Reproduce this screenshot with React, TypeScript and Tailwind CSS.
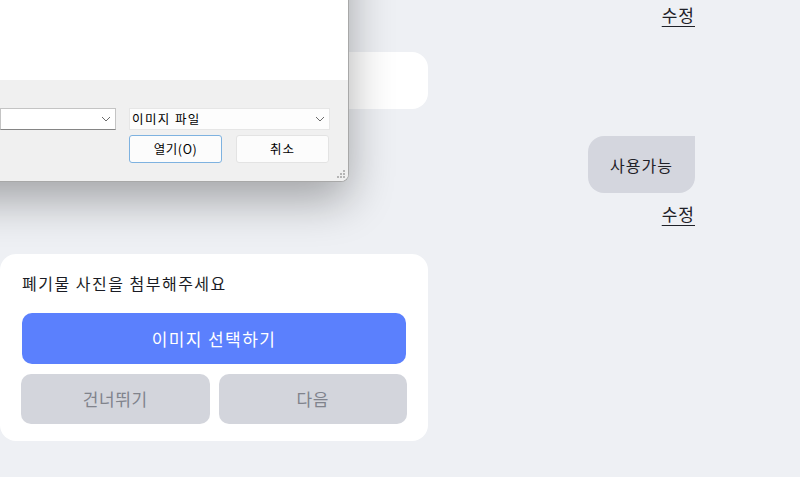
const font = "font-['Noto_Sans_CJK_KR','Noto_Sans',sans-serif]";

const Chevron = () => (
  <svg width="10" height="6" viewBox="0 0 10 6" className="text-[#6b6b6b]">
    <path d="M1 1l4 4 4-4" fill="none" stroke="currentColor" strokeWidth="1" />
  </svg>
);

const FileDialog = () => (
  <div className="absolute left-[-300px] top-[-220px] w-[649px] h-[402px] flex flex-col bg-white border-r border-b border-[#a8a8a8] rounded-br-lg shadow-[0_18px_45px_rgba(0,0,0,0.32)] overflow-hidden">
    <div className="flex-1 bg-white" />
    <div className="relative h-[101px] bg-[#f0f0f0] pl-[300px] pt-[28px] text-[12.5px] text-black">
      <div className="flex gap-[13px]">
        <div className="w-[116px] h-[22px] bg-white border border-[#c4c4c4] border-b-[#858585] flex items-center justify-end pr-[4px]">
          <Chevron />
        </div>
        <div className="w-[201px] h-[22px] bg-[#fdfdfd] border border-[#e6e6e6] flex items-center justify-between pl-[2px] pr-[4px]">
          <span className="tracking-[1.4px]">이미지 파일</span>
          <Chevron />
        </div>
      </div>
      <div className="flex gap-[14px] ml-[129px] mt-[5px]">
        <div className="w-[93px] h-[28px] bg-[#fcfcfc] border border-[#7eb2e0] rounded-[3px] flex items-center justify-center tracking-[0.6px]">
          열기(O)
        </div>
        <div className="w-[93px] h-[28px] bg-[#fcfcfc] border border-[#e3e3e3] rounded-[3px] flex items-center justify-center tracking-[1px]">
          취소
        </div>
      </div>
      <svg width="8" height="8" viewBox="0 0 8 8" className="absolute right-[3px] bottom-[3px]">
        <g fill="#b5b5b5">
          <rect x="6" y="0" width="2" height="2" />
          <rect x="3" y="3" width="2" height="2" />
          <rect x="6" y="3" width="2" height="2" />
          <rect x="0" y="6" width="2" height="2" />
          <rect x="3" y="6" width="2" height="2" />
          <rect x="6" y="6" width="2" height="2" />
        </g>
      </svg>
    </div>
  </div>
);

export default function App() {
  return (
    <div className={`relative w-[800px] h-[477px] overflow-hidden bg-[#eef0f4] ${font}`}>
      <div className="flex flex-col pr-[105px]">
        <button className="self-end mt-[2px] h-[25px] text-[17px] leading-[25px] tracking-[1px] text-[#1f2128] underline underline-offset-[4px]">
          수정
        </button>
        <div className="mt-[25px] w-[428px] h-[57px] bg-white rounded-r-2xl" />
        <div className="self-end mt-[27px] h-[57px] px-[22px] flex items-center bg-[#d4d6de] rounded-2xl rounded-tr-none text-[16px] tracking-[1px] text-[#1f2128]">
          사용가능
        </div>
        <button className="self-end mt-[8px] h-[25px] text-[17px] leading-[25px] tracking-[1px] text-[#1f2128] underline underline-offset-[4px]">
          수정
        </button>
        <div className="mt-[28px] w-[428px] bg-white rounded-2xl px-[22px] pt-[17px] pb-[17px]">
          <p className="text-[16px] leading-[24px] tracking-[1.5px] text-[#1a1c24]">폐기물 사진을 첨부해주세요</p>
          <button className="mt-[18px] w-full h-[51px] bg-[#5b80fd] rounded-[10px] text-white text-[17px] tracking-[1.4px]">
            이미지 선택하기
          </button>
          <div className="mt-[10px] -mx-[1px] grid grid-cols-2 gap-[9px]">
            <button className="h-[50px] bg-[#d3d5dc] rounded-[10px] text-[17px] tracking-[0.6px] text-[#80838c]">건너뛰기</button>
            <button className="h-[50px] bg-[#d3d5dc] rounded-[10px] text-[17px] tracking-[0.6px] text-[#80838c]">다음</button>
          </div>
        </div>
      </div>
      <FileDialog />
    </div>
  );
}
